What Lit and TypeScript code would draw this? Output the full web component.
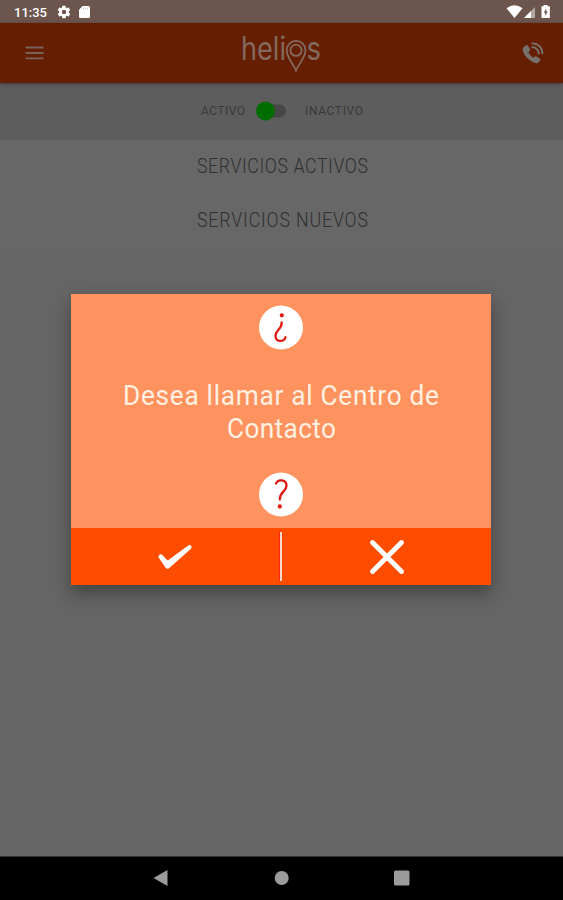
import { LitElement, html, css, svg } from "lit";
import { customElement, property } from "lit/decorators.js";

/** One line of slightly condensed text, fitted to an exact width by its letter spacing. */
@customElement("fit-text")
class FitText extends LitElement {
  @property() text = "";
  @property({ type: Number }) width = 100;
  @property({ type: Number }) height = 20;
  @property({ type: Number }) base = 15;
  @property({ type: Number }) squeeze = 0.92;

  static styles = css`
    :host { display: block; }
    svg { display: block; overflow: visible; }
    text { fill: currentColor; }
  `;

  render() {
    return html`<svg width=${this.width} height=${this.height}>
      <text x="0" y=${this.base} transform="scale(${this.squeeze} 1)"
        textLength=${this.width / this.squeeze} lengthAdjust="spacing">${this.text}</text>
    </svg>`;
  }
}

@customElement("app-root")
class AppRoot extends LitElement {
  static styles = css`
    :host {
      display: flex;
      flex-direction: column;
      position: relative;
      width: 563px;
      height: 900px;
      overflow: hidden;
      background: #656565;
      font-family: Roboto, "Liberation Sans", sans-serif;
    }
    svg { display: block; }
    .status {
      height: 23px;
      background: #6b554d;
      display: flex;
      align-items: center;
      justify-content: space-between;
      box-sizing: border-box;
      padding: 1px 11px 0 14px;
      color: #fff;
      font-size: 13px;
      font-weight: 500;
    }
    .group { display: flex; align-items: center; }
    .clock { width: 33px; margin-right: 10px; }
    .gear { margin-right: 8px; }
    .bar {
      height: 60px;
      box-sizing: border-box;
      background: #661e00;
      display: grid;
      grid-template-columns: 1fr 80px 1fr;
      align-items: center;
      padding: 0 19px 0 25px;
      box-shadow: 0 1px 3px rgba(0, 0, 0, 0.4);
      z-index: 1;
    }
    .bar .logo { margin-left: -3px; }
    .call { justify-self: end; }
    .logo { font-family: Inter, sans-serif; font-weight: 400; font-size: 32px; overflow: visible; }
    .toggle {
      height: 57px;
      background: #5d5d5d;
      display: flex;
      align-items: center;
      box-sizing: border-box;
      padding: 0 0 1px 201px;
      color: #3a3a3a;
      font-size: 13px;
    }
    .switch { margin: 0 19px 0 11px; }
    .rows { color: #303030; font-size: 19.3px; font-weight: 300; background: #676767; height: 107px; padding-left: 197px; }
    .rows fit-text { height: 54px; }
    .space { flex: 1; }
    .nav {
      height: 44px;
      border-top: 1px solid #333;
      box-sizing: border-box;
      background: #000;
      display: flex;
      justify-content: center;
    }
    .dialog {
      position: absolute;
      left: 71px;
      top: 294px;
      width: 420px;
      height: 291px;
      display: flex;
      flex-direction: column;
      background: #ff935f;
      box-shadow: 0 12px 16px rgba(0, 0, 0, 0.16), 0 5px 16px rgba(0, 0, 0, 0.2);
    }
    .body { height: 234px; box-sizing: border-box; padding-top: 11px; display: flex; flex-direction: column; align-items: center; }
    .message { color: #fff0e2; font-size: 28.500px; margin: 26px 0 27px; height: 69px; display: flex; flex-direction: column; align-items: center; }
    .actions { height: 57px; background: #ff4d00; display: grid; grid-template-columns: 208px 3px 209px; align-items: center; justify-items: center; }
    .divider { width: 3px; height: 49px; background: #ffd5cf; border-left: 1px solid #ff2418; box-sizing: border-box; }
  `;

  private badge(mark: unknown) {
    return html`<svg width="44" height="45" viewBox="0 0 44 45">
      <circle cx="22" cy="22.500" r="22" fill="#fff" />
      <g fill="none" stroke="#e01b12" stroke-width="2.300" stroke-linecap="round">${mark}</g>
    </svg>`;
  }

  render() {
    return html`
      <div class="status">
        <div class="group">
          <fit-text class="clock" text="11:35" .width=${33} .height=${16} .base=${12.8} .squeeze=${1}></fit-text>
          <svg class="gear" width="14" height="14" viewBox="1 1 22 22">
            <path fill="#fff" d="M19.4 13c0-.3.1-.6.1-1s0-.7-.1-1l2.1-1.600c.2-.2.2-.4.100-.6l-2-3.500c-.1-.2-.4-.3-.6-.2l-2.500 1a7 7 0 0 0-1.700-1l-.4-2.600a.5.5 0 0 0-.5-.5h-4c-.2 0-.4.2-.5.5l-.4 2.600c-.6.2-1.200.6-1.700 1l-2.500-1c-.2-.1-.5 0-.6.2l-2 3.500c-.1.2-.1.5.1.6L4.500 11a8 8 0 0 0 0 2l-2.100 1.600c-.2.2-.2.4-.1.6l2 3.500c.1.2.4.3.6.2l2.500-1c.5.4 1.100.7 1.700 1l.4 2.600c0 .3.2.5.5.5h4c.2 0 .5-.2.5-.5l.4-2.600c.6-.3 1.200-.6 1.700-1l2.500 1c.2.1.5 0 .6-.2l2-3.500c.1-.2.1-.5-.1-.6zM12 15.500a3.500 3.500 0 1 1 0-7 3.500 3.500 0 0 1 0 7z"/>
          </svg>
          <svg width="11" height="12" viewBox="0 0 11 12">
            <path fill="#fff" d="M3.600 0H9.500Q11 0 11 1.500V10.500Q11 12 9.500 12H1.500Q0 12 0 10.500V3.700Z"/>
            <path stroke="#c9beb9" stroke-width=".8" d="M4.500 1.500V3.500M6.500 1.500V3.500M8.500 1.500V3.500"/>
          </svg>
        </div>
        <svg width="46" height="14" viewBox="506 5 46 14">
          <path fill="#fff" d="M506.500 8.300Q514.500 2.300 522.500 8.300L514.500 18Z"/>
          <path fill="#b3a7a1" d="M524 18L535 7V18Z"/>
          <path fill="#fff" d="M524 18L531 11V18Z"/>
          <path fill="#fff" d="M543.500 5h4v1.300h2.300V18h-8.300V6.300h2z"/>
          <path fill="#6b554d" d="M546.300 8.500L543.700 12.700H545.200V16L547.700 11.600H546.300Z"/>
        </svg>
      </div>

      <div class="bar">
        <svg width="19" height="14" viewBox="0 0 19 14">
          <path stroke="#78625b" stroke-width="1.800" d="M.5 1.500H18.500M.5 7H18.500M.5 12.400H18.500"/>
        </svg>
        <svg class="logo" width="80" height="44" viewBox="242 31 80 44">
          <g fill="#83695f">
            <text x="241" y="59.700" textLength="45" lengthAdjust="spacingAndGlyphs">heli</text>
            <text x="306.500" y="59.700" textLength="14.500" lengthAdjust="spacingAndGlyphs">s</text>
          </g>
          <g fill="none" stroke="#83695f" stroke-width="1.800">
            <path d="M296 70.500C293.500 64 286.700 57.500 286.700 50.300A9.400 9.400 0 0 1 305.500 50.300C305.500 57.500 298.500 64 296 70.500Z"/>
            <circle cx="296" cy="50.300" r="5.600"/>
          </g>
        </svg>
        <svg class="call" width="22" height="22" viewBox="0 0 22 22">
          <path fill="#77706c" d="M1.500 5.200L4.200 3.200Q5.300 2.700 6 3.700L8 7Q8.400 8 7.600 8.800L6.300 10.200Q7.800 13.500 11.200 15.700L12.900 14.500Q13.800 14 14.700 14.500L18 16.800Q18.900 17.600 18.200 18.600L16.300 20.700Q14.500 21.700 11.500 20.400Q3.500 16.500.8 9Q.2 6.500 1.500 5.200Z"/>
          <path fill="none" stroke="#77706c" stroke-width="1.900" stroke-linecap="round" d="M10.500 1.500C16.200 1.200 20.300 5.800 20.300 11.300M10.300 5.300C14 5.200 16.600 8 16.700 11.500"/>
        </svg>
      </div>

      <div class="toggle">
        <fit-text text="ACTIVO" .width=${44} .height=${16} .base=${12.5}></fit-text>
        <svg class="switch" width="30" height="20" viewBox="0 0 30 20">
          <rect x="8" y="3.500" width="22" height="13" rx="6.500" fill="#464646"/>
          <circle cx="9.500" cy="10" r="9.400" fill="#006d00"/>
        </svg>
        <fit-text text="INACTIVO" .width=${58} .height=${16} .base=${12.5}></fit-text>
      </div>
      <div class="rows">
        <fit-text text="SERVICIOS ACTIVOS" .width=${171} .height=${54} .base=${32.8}></fit-text>
        <fit-text text="SERVICIOS NUEVOS" .width=${171} .height=${54} .base=${33}></fit-text>
      </div>
      <div class="space"></div>
      <div class="nav">
        <svg width="260" height="43" viewBox="152 857 260 43" fill="#9b9b9b">
          <path d="M153.500 878L167.500 870V886Z"/>
          <circle cx="281.700" cy="878" r="7"/>
          <rect x="394" y="870.500" width="15.500" height="15" rx="1.500"/>
        </svg>
      </div>

      <div class="dialog">
        <div class="body">
          ${this.badge(svg`<circle cx="22.800" cy="10.300" r="1" fill="#e01b12"/><path d="M22.700 17.500C23 24.500 16.200 24.800 16.500 31C16.700 37.200 24.500 37.500 26.500 32.300"/>`)}
          <div class="message">
            <fit-text text="Desea llamar al Centro de" .width=${316} .height=${33} .base=${29}></fit-text>
            <fit-text text="Contacto" .width=${109} .height=${33} .base=${29}></fit-text>
          </div>
          ${this.badge(svg`<circle cx="20.800" cy="34.500" r="1" fill="#e01b12"/><path d="M17 11.500C19.200 6.700 27.400 7.500 27.500 13.500C27.600 19.800 20.500 19.800 20.800 27.500"/>`)}
        </div>
        <div class="actions">
          <svg width="36" height="28" viewBox="158 542 36 28">
            <path d="M159.600 556.500Q159 554.500 160.800 553.500Q162.300 552.800 163.500 554.200L168.800 559.600L189.200 544.400Q191 543.400 192.200 544.800Q193.200 546.400 192 547.800L170 567.200Q168.200 568.500 166.800 567Z" fill="#fff"/>
          </svg>
          <div class="divider"></div>
          <svg width="36" height="36" viewBox="0 0 36 36">
            <path d="M3.500 3.500L32.500 32.500M32.500 3.500L3.500 32.500" stroke="#fff" stroke-width="4.900" stroke-linecap="round"/>
          </svg>
        </div>
      </div>
    `;
  }
}
